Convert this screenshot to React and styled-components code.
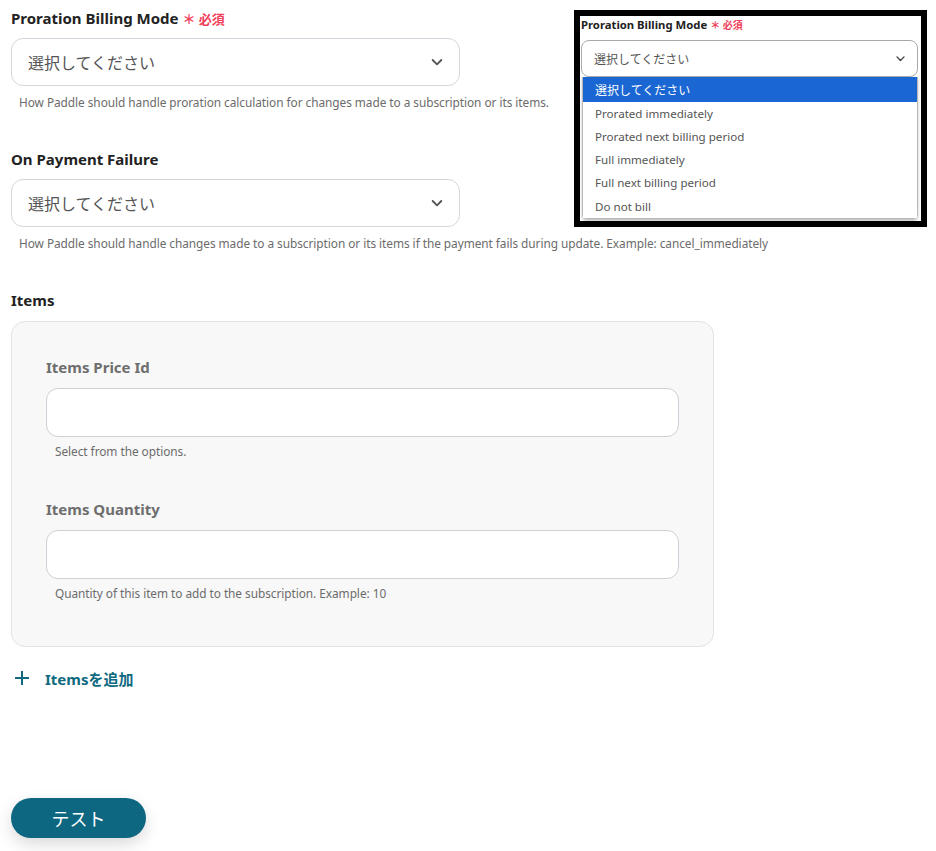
import React from "react";
import styled, { createGlobalStyle } from "styled-components";

const Global = createGlobalStyle`
  html, body { margin: 0; padding: 0; background: #fff; }
  body { font-family: "Noto Sans", "Noto Sans CJK JP", sans-serif; color: #222; }
  * { box-sizing: border-box; }
`;

const Page = styled.div`
  position: relative;
  width: 936px;
  height: 851px;
  padding: 8px 0 0 11px;
`;

const Field = styled.div`
  width: ${(p) => p.$w || "449px"};
  margin-bottom: ${(p) => p.$mb || "39px"};
`;

const Label = styled.div`
  display: flex;
  align-items: center;
  height: 20px;
  font-size: 15px;
  font-weight: 700;
  color: ${(p) => (p.$muted ? "#6e6e6e" : "#222")};
  margin-bottom: ${(p) => p.$mb || "10px"};
  white-space: nowrap;
`;

const Required = styled.span`
  color: #f0405a;
  font-size: 13px;
  font-weight: 700;
  margin-left: 4px;
  display: inline-flex;
  align-items: center;
  gap: 2px;
`;

const SelectBox = styled.div`
  height: 48px;
  border: 1px solid #d3d6dc;
  border-radius: 12px;
  background: #fff;
  display: flex;
  align-items: center;
  justify-content: space-between;
  padding: 0 14px 0 16px;
  font-size: 16px;
  color: #555;
`;

const Desc = styled.div`
  margin-top: ${(p) => p.$mt || "8px"};
  padding-left: ${(p) => p.$pl || "8px"};
  font-size: 11.85px;
  letter-spacing: -0.05px;
  line-height: 16px;
  color: #6b6b6b;
  white-space: nowrap;
`;

const Panel = styled.div`
  width: 703px;
  margin-top: 11px;
  background: #f8f8f8;
  border: 1px solid #e3e3e3;
  border-radius: 14px;
  padding: 35px 34px 45px 34px;
  display: flex;
  flex-direction: column;
  gap: 40px;
`;

const Input = styled.div`
  height: 49px;
  border: 1px solid #cdd0d6;
  border-radius: 12px;
  background: #fff;
`;

const AddRow = styled.div`
  display: flex;
  align-items: center;
  gap: 15px;
  margin-top: 21px;
  padding-left: 3px;
  color: #0f6a80;
  font-size: 15px;
  font-weight: 700;
  height: 20px;
`;

const TestButton = styled.button`
  margin-top: 110px;
  width: 135px;
  height: 40px;
  border: none;
  border-radius: 20px;
  background: #0e6780;
  color: #fff;
  font-family: "Noto Sans", "Noto Sans CJK JP", sans-serif;
  font-size: 18px;
  box-shadow: 0 6px 16px rgba(0, 0, 0, 0.15);
`;

/* Overlay snapshot */
const Snapshot = styled.div`
  position: absolute;
  left: 574px;
  top: 10px;
  width: 353px;
  height: 217px;
  border: 6px solid #000;
  background: #fff;
  overflow: hidden;
  padding: 0 0 0 1px;
`;

const MiniLabel = styled.div`
  height: 14px;
  margin-top: 1px;
  font-size: 11.3px;
  font-weight: 700;
  color: #222;
  display: flex;
  align-items: center;
  white-space: nowrap;
`;

const MiniRequired = styled.span`
  color: #f0405a;
  font-size: 10px;
  margin-left: 3px;
`;

const MiniSelect = styled.div`
  margin-top: 9px;
  width: 337px;
  height: 37px;
  border: 1px solid #a9a9a9;
  border-radius: 8px;
  display: flex;
  align-items: center;
  justify-content: space-between;
  padding: 0 10px 0 12px;
  font-size: 12px;
  color: #555;
  position: relative;
  z-index: 1;
`;

const MiniList = styled.div`
  position: relative;
  z-index: 2;
  margin-left: 1px;
  width: 336px;
  border: 1px solid #b8b8b8;
  border-top: none;
  border-radius: 0 0 5px 5px;
  background: #fff;
  box-shadow: 0 2px 3px rgba(0, 0, 0, 0.25);
`;

const MiniOption = styled.div`
  height: ${(p) => (p.$first ? "25px" : "23.25px")};
  display: flex;
  align-items: center;
  padding-left: 12px;
  padding-bottom: ${(p) => (p.$first ? "0" : "1px")};
  font-size: ${(p) => (p.$first ? "12px" : "11.6px")};
  background: ${(p) => (p.$active ? "#1a66d2" : "#fff")};
  color: ${(p) => (p.$active ? "#fff" : "#555")};
  white-space: nowrap;
`;

const Chevron = ({ size = 16, color = "#555", w = 2.8 }) => (
  <svg width={size} height={size} viewBox="0 0 24 24" fill="none">
    <path d="M5.5 9l6.5 6.5 6.5-6.5" stroke={color} strokeWidth={w} strokeLinecap="round" strokeLinejoin="round" />
  </svg>
);

const Plus = () => (
  <svg width="16" height="16" viewBox="0 0 16 16">
    <path d="M8 1v14M1 8h14" stroke="#0f6a80" strokeWidth="2" />
  </svg>
);

const options = [
  "選択してください",
  "Prorated immediately",
  "Prorated next billing period",
  "Full immediately",
  "Full next billing period",
  "Do not bill",
];

export default function App() {
  return (
    <Page>
      <Global />
      <Field>
        <Label>
          Proration Billing Mode
          <Required>＊ 必須</Required>
        </Label>
        <SelectBox>
          選択してください
          <Chevron />
        </SelectBox>
        <Desc>How Paddle should handle proration calculation for changes made to a subscription or its items.</Desc>
      </Field>

      <Field>
        <Label>On Payment Failure</Label>
        <SelectBox>
          選択してください
          <Chevron />
        </SelectBox>
        <Desc>How Paddle should handle changes made to a subscription or its items if the payment fails during update. Example: cancel_immediately</Desc>
      </Field>

      <Label $mb="0">Items</Label>
      <Panel>
        <Field $w="633px" $mb="0">
          <Label $muted $mb="11px">Items Price Id</Label>
          <Input />
          <Desc $pl="9px" $mt="6px">Select from the options.</Desc>
        </Field>
        <Field $w="633px" $mb="0">
          <Label $muted $mb="11px">Items Quantity</Label>
          <Input />
          <Desc $pl="9px" $mt="6px">Quantity of this item to add to the subscription. Example: 10</Desc>
        </Field>
      </Panel>

      <AddRow>
        <Plus />
        Itemsを追加
      </AddRow>

      <TestButton>テスト</TestButton>

      <Snapshot>
        <MiniLabel>
          Proration Billing Mode
          <MiniRequired>＊ 必須</MiniRequired>
        </MiniLabel>
        <MiniSelect>
          選択してください
          <Chevron size={13} color="#444" w={2.6} />
        </MiniSelect>
        <MiniList>
          {options.map((o, i) => (
            <MiniOption key={o} $active={i === 0} $first={i === 0}>
              {o}
            </MiniOption>
          ))}
        </MiniList>
      </Snapshot>
    </Page>
  );
}
